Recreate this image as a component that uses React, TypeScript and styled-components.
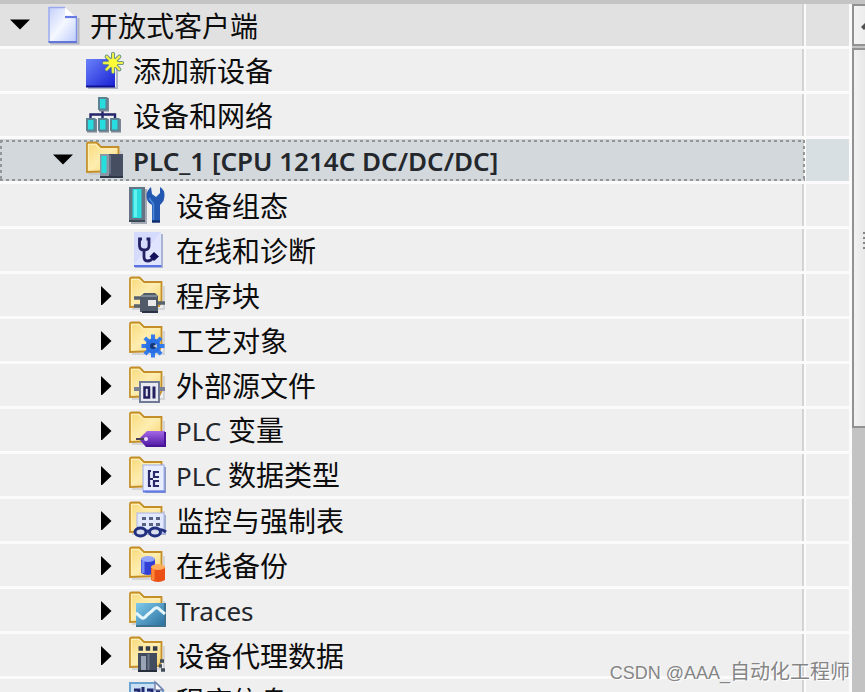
import React from "react";
import styled, { createGlobalStyle, css } from "styled-components";

const GlobalStyle = createGlobalStyle`
  * { box-sizing: border-box; }
  body { margin: 0; background: #efefef; }
`;

const Page = styled.div`
  position: relative;
  display: flex;
  height: 100vh;
  overflow: hidden;
  border-top: 4px solid #c4c4c4;
  background: #fbfbfb;
  color: #0c0c0c;
  font-family: "Noto Sans", "Noto Sans CJK SC", sans-serif;
`;

const Tree = styled.ul`
  flex: 1;
  min-width: 0;
  margin: 0;
  padding: 0;
  list-style: none;
`;

const Row = styled.li`
  display: grid;
  grid-template-columns: minmax(0, 1fr) 43px;
  column-gap: 2px;
  height: 45px;
  padding-bottom: 3px;
`;

type Tone = "header" | "plain" | "selected";

const tones: Record<Tone, string> = {
  header: "#e1e1e1",
  plain: "#efefef",
  selected: "#d2d8dc",
};

const focusFrame = css`
  &::after {
    content: "";
    position: absolute;
    inset: 1px -3px 0 0;
    pointer-events: none;
    background:
      repeating-linear-gradient(90deg, #929699 0 3px, transparent 3px 6px) 0 0 / 100% 2px no-repeat,
      repeating-linear-gradient(90deg, #929699 0 3px, transparent 3px 6px) 0 100% / 100% 2px no-repeat,
      repeating-linear-gradient(180deg, #929699 0 3px, transparent 3px 6px) 0 0 / 2px 100% no-repeat,
      repeating-linear-gradient(180deg, #929699 0 3px, transparent 3px 6px) 100% 0 / 2px 100% no-repeat;
  }
`;

const NameCell = styled.div<{ $level: number; $tone: Tone }>`
  position: relative;
  display: flex;
  align-items: center;
  padding-left: ${(p) => p.$level * 43}px;
  background: ${(p) => tones[p.$tone]};
  border-right: 2px solid #d3d3d3;
  ${(p) => p.$tone === "selected" && focusFrame}
`;

const SideCell = styled.div<{ $tone: Tone }>`
  background: ${(p) => (p.$tone === "selected" ? "#d8dfe3" : tones[p.$tone])};
`;

const Toggle = styled.button`
  flex: none;
  display: grid;
  place-items: center;
  width: 43px;
  height: 38px;
  padding: 0 3px 0 0;
  border: 0;
  background: none;
`;

const ToggleSpace = styled.span`
  flex: none;
  width: 43px;
`;

const IconBox = styled.svg`
  flex: none;
  width: 38px;
  height: 38px;
  overflow: visible;
`;

const Label = styled.span<{ $strong: boolean; $latin: boolean }>`
  margin-left: 9px;
  padding-top: ${(p) => (p.$latin ? 0 : 2)}px;
  font-size: 28px;
  line-height: 40px;
  white-space: nowrap;
  font-weight: ${(p) => (p.$strong ? 600 : 400)};
`;

const Latin = styled.span`
  font-size: 26px;
  color: #24272c;
`;

const Scrollbar = styled.div`
  flex: none;
  display: flex;
  flex-direction: column;
  width: 13px;
  margin-left: 3px;
  background: #c3c3c3;
  overflow: hidden;
`;

const ScrollUp = styled.button`
  flex: none;
  display: block;
  width: 34px;
  height: 42px;
  padding: 0;
  border: 2px solid #929292;
  background: linear-gradient(90deg, #f4f4f4, #dedede);
`;

const Thumb = styled.div`
  flex: none;
  width: 34px;
  height: 380px;
  margin-top: 2px;
  padding: 182px 0 0 9px;
  border: 2px solid #929292;
  background: linear-gradient(90deg, #f2f2f2, #d6d6d6);
`;

const Grip = styled.div`
  width: 16px;
  height: 18px;
  background: repeating-linear-gradient(180deg, #858585 0 2px, transparent 2px 5px);
`;

const Watermark = styled.div`
  position: absolute;
  right: 15px;
  bottom: 4px;
  font-family: "Liberation Sans", "Noto Sans CJK SC", sans-serif;
  font-size: 20px;
  line-height: 30px;
  color: #858585;
  text-shadow: 1px 1px 0 #ffffff;
  white-space: nowrap;
`;

const WatermarkName = styled.span`
  font-size: 18px;
`;

const Folder = () => (
  <>
    <defs>
      <linearGradient id="folder" x1="0" y1="0" x2="1" y2="1">
        <stop offset="0" stopColor="#f8d978" />
        <stop offset="0.5" stopColor="#fdedb0" />
        <stop offset="1" stopColor="#f7d36b" />
      </linearGradient>
    </defs>
    <path d="M3 33 35 33 35 10" fill="none" stroke="#b9bcc4" strokeWidth="2" opacity="0.5" />
    <path d="M1 31V3Q1 1.5 2.5 1.5H10.5L15 6H32.5V25L30 30Z" fill="url(#folder)" stroke="#c48f28" strokeWidth="1.8" />
    <path d="M2.5 29V3.5H10L14.5 8H31" fill="none" stroke="#fff0b8" strokeWidth="1.2" />
  </>
);

type IconName =
  | "project" | "add" | "network" | "plc" | "config" | "diagnose" | "blocks" | "tech"
  | "source" | "tags" | "types" | "watch" | "backup" | "traces" | "proxy" | "info";

const spokes = [0, 45, 90, 135, 180, 225, 270, 315];

const drawings: Record<IconName, React.ReactNode> = {
  project: (
    <>
      <defs>
        <linearGradient id="paper" x1="0" y1="0" x2="1" y2="1">
          <stop offset="0" stopColor="#c3cffa" />
          <stop offset="0.5" stopColor="#f5f8ff" />
          <stop offset="1" stopColor="#bccbfa" />
        </linearGradient>
      </defs>
      <path d="M7 37.5H35.5V12" fill="none" stroke="#9298aa" strokeWidth="2" opacity="0.6" />
      <path d="M6 1.5H22L33.5 12V36H6Z" fill="url(#paper)" />
      <path d="M6 36V1.5H22" fill="none" stroke="#9aa9ee" strokeWidth="1.5" />
      <path d="M33.5 12V36" stroke="#8294e6" strokeWidth="1.5" />
      <path d="M5.5 36H34" stroke="#6277d9" strokeWidth="2" />
      <path d="M22 1.5V11.5H33Z" fill="#fff" />
      <path d="M22 11H34" stroke="#647be3" strokeWidth="2.2" />
    </>
  ),
  add: (
    <>
      <defs>
        <linearGradient id="cube" x1="0" y1="0" x2="1" y2="1">
          <stop offset="0" stopColor="#6a82fa" />
          <stop offset="1" stopColor="#1820d4" />
        </linearGradient>
      </defs>
      <path d="M2 37H31V16" fill="none" stroke="#858cac" strokeWidth="2" opacity="0.6" />
      <path d="M0 8H29V36H0Z" fill="url(#cube)" />
      <path d="M0 35.5H29" stroke="#0d1090" strokeWidth="2" />
      {spokes.map((a) => (
        <path key={a} d="M27 12V3" stroke="#4d8087" strokeWidth="4" strokeLinecap="round" transform={`rotate(${a} 27 12)`} />
      ))}
      {spokes.map((a) => (
        <path key={a} d="M27 12V3" stroke="#f1f04a" strokeWidth="2.4" strokeLinecap="round" transform={`rotate(${a} 27 12)`} />
      ))}
      <circle cx="27" cy="12" r="4.5" fill="#ffff38" />
    </>
  ),
  network: (
    <>
      <path d="M16.5 13V24M4.5 25V18.5H29V25" fill="none" stroke="#24256b" strokeWidth="2.4" />
      {[[12, 1], [0, 22], [12, 22], [24, 22]].map(([x, y]) => (
        <g key={`${x}-${y}`}>
          <rect x={x + 1} y={y + 1} width="10" height="13.5" fill="#7b8796" />
          <rect x={x} y={y} width="9.5" height="13" fill="#5b8290" />
          <rect x={x + 2} y={y + 2} width="5.5" height="9.5" fill="#27dcdf" />
        </g>
      ))}
    </>
  ),
  plc: (
    <>
      <Folder />
      <rect x="14" y="13" width="23" height="24" fill="#475064" />
      <rect x="14" y="13" width="9" height="22" fill="#8a97a4" />
      <rect x="15.5" y="15" width="5" height="17" fill="#25dfdf" />
      <path d="M23 14H36V34H23Z" fill="#464f61" />
      <path d="M24 14V33" stroke="#667187" strokeWidth="2" />
      <path d="M14 36H37" stroke="#2e3648" strokeWidth="2" />
    </>
  ),
  config: (
    <>
      <rect x="2" y="3" width="16" height="35" fill="#a5aab4" />
      <rect x="0" y="1" width="16" height="35" fill="#657485" />
      <rect x="3.5" y="3" width="9" height="29" fill="#29dce0" />
      <path d="M5 4H8V31H5Z" fill="#65f1ee" />
      <path d="M0 35H16" stroke="#3d4859" strokeWidth="2" />
      <path d="M26 37V19L35 14" fill="none" stroke="#9ba8be" strokeWidth="2" opacity="0.5" />
      <path d="M23 36V19Q17 16 17.500 9Q18 4 22 1L23 8L27 11L31 7V1Q36 4 35.500 10Q35 16 31 19V36Z" fill="#2258b2" />
      <path d="M24.5 34V18L20 12" fill="none" stroke="#4b88d7" strokeWidth="1.6" />
      <path d="M23 35.5H31" stroke="#0f2c6d" strokeWidth="2.4" />
    </>
  ),
  diagnose: (
    <>
      <rect x="6" y="3" width="28" height="34" fill="#a9b4d5" />
      <rect x="5" y="1" width="27" height="34" fill="#e0e5fd" />
      <path d="M5 1H32L5 33Z" fill="#cbd4fb" opacity="0.6" />
      <path d="M5 35H32.5" stroke="#5971e5" strokeWidth="2" />
      <path d="M13 8H10.500V15Q11 19 15 19Q20 19 20 15V8H17.500M15 19V26Q15 30 18.500 30Q22 30 24 27" fill="none" stroke="#232064" strokeWidth="2.8" />
      <path d="M25 21L30 25.500L25 30L20.500 25.500Z" fill="#13105c" />
    </>
  ),
  blocks: (
    <>
      <Folder />
      <path d="M5 22H12M5 30H12M28 27H36" stroke="#59636e" strokeWidth="3.4" />
      <path d="M11 21L15 17H26L29 20V36H11Z" fill="#505a69" />
      <path d="M12 20H28" stroke="#7e8996" strokeWidth="2" />
      <rect x="19" y="24" width="8" height="6" fill="#e9e9e9" />
      <path d="M13 36H29" stroke="#293345" strokeWidth="2" />
    </>
  ),
  tech: (
    <>
      <Folder />
      {spokes.map((a) => (
        <path key={a} d="M24 25V13.5" stroke="#347bed" strokeWidth="4" transform={`rotate(${a} 24 25)`} />
      ))}
      <circle cx="24" cy="25" r="7.5" fill="#2870e4" />
      <circle cx="24" cy="25" r="3" fill="#16367b" />
      <path d="M24 25L28 23V27Z" fill="#b9c7cf" />
    </>
  ),
  source: (
    <>
      <Folder />
      <path d="M5 23H10M30 23H36" stroke="#7a8194" strokeWidth="4" />
      <rect x="11" y="16" width="19" height="20" fill="#e8e9f2" stroke="#717a95" strokeWidth="2" />
      <rect x="15.5" y="21.5" width="4.500" height="10" fill="none" stroke="#22205f" strokeWidth="2.5" />
      <path d="M25 20.5V32.5" stroke="#22205f" strokeWidth="3" />
    </>
  ),
  tags: (
    <>
      <Folder />
      <defs>
        <linearGradient id="tag" x1="0" y1="0" x2="0" y2="1">
          <stop offset="0" stopColor="#a467e7" />
          <stop offset="1" stopColor="#4b159f" />
        </linearGradient>
      </defs>
      <path d="M10 28L18 20H36V36H17Z" fill="url(#tag)" />
      <path d="M17 35H36V21" fill="none" stroke="#4a1697" strokeWidth="2" />
      <path d="M7 28H16" stroke="#494057" strokeWidth="2" />
      <circle cx="17" cy="28" r="2" fill="#efdfff" />
    </>
  ),
  types: (
    <>
      <Folder />
      <rect x="16" y="11" width="21" height="26" fill="#8d9bc0" />
      <rect x="14" y="9" width="21" height="26" fill="#e8edff" stroke="#9caceb" />
      <path d="M14 35.5H36" stroke="#627be7" strokeWidth="2" />
      <path d="M22 15H20V30H22M30 16H25V21H30M30 25H25V30H30M20 23H24" fill="none" stroke="#2a2a69" strokeWidth="2.2" />
    </>
  ),
  watch: (
    <>
      <Folder />
      <rect x="10" y="14" width="27" height="20" fill="#a4b0cc" />
      <rect x="8" y="12" width="27" height="20" fill="#e1e8ff" stroke="#a7b5e5" />
      <path d="M13 17.5H31M13 23.5H31" stroke="#56627f" strokeWidth="3" strokeDasharray="4 3" />
      <ellipse cx="11.5" cy="31" rx="5.500" ry="4" fill="#d8deee" stroke="#223080" strokeWidth="3" />
      <ellipse cx="26" cy="31" rx="5.500" ry="4" fill="#d8deee" stroke="#223080" strokeWidth="3" />
      <path d="M17 31Q19 29 21 31M31 29Q33 28 37 31" fill="none" stroke="#223080" strokeWidth="3" />
    </>
  ),
  backup: (
    <>
      <Folder />
      <path d="M12 13Q19 9 26 13V27Q19 31 12 27Z" fill="#323fd4" />
      <ellipse cx="19" cy="13" rx="7" ry="3" fill="#93a4fc" />
      <path d="M14 15V27" stroke="#7488f6" strokeWidth="3" />
      <path d="M22 21Q29 17 36 21V34Q29 38 22 34Z" fill="#ea5016" />
      <ellipse cx="29" cy="21" rx="7" ry="3" fill="#ffad5b" />
      <path d="M24 23V34" stroke="#ff8935" strokeWidth="3" />
    </>
  ),
  traces: (
    <>
      <Folder />
      <defs>
        <linearGradient id="scope" x1="0" y1="0" x2="1" y2="1">
          <stop offset="0" stopColor="#7fcbed" />
          <stop offset="1" stopColor="#286c9b" />
        </linearGradient>
      </defs>
      <rect x="7" y="12" width="29" height="24" fill="url(#scope)" />
      <path d="M7 35H36V12" fill="none" stroke="#3d7391" strokeWidth="2" />
      <path d="M7 22L13 27Q15 28 18 24L23 20Q26 16 29 17L36 23" fill="none" stroke="#e4f5fc" strokeWidth="3" />
    </>
  ),
  proxy: (
    <>
      <Folder />
      <path d="M9.5 12.5H28.5" stroke="#353b49" strokeWidth="4.500" strokeDasharray="4.500 2.700" />
      <rect x="9" y="17" width="19" height="19" fill="#434c5f" />
      <rect x="12" y="20" width="5" height="14" fill="#98a4b4" />
      <path d="M19.500 18V35" stroke="#6b7689" strokeWidth="2" />
      <path d="M9 35H28" stroke="#262e3b" strokeWidth="2" />
      <path d="M31 25H35M32 34H36M30 30H33" stroke="#434c5a" strokeWidth="3.500" />
    </>
  ),
  info: (
    <>
      <path d="M1 2H27L34 9V37H1Z" fill="#c8dff4" stroke="#69a2cf" strokeWidth="2" />
      <path d="M26 1V9H34Z" fill="#fff" stroke="#7984ac" strokeWidth="1.5" />
      <path d="M5 9H10V14M14 6V15M18 9H23V14M27 11H31" fill="none" stroke="#20286f" strokeWidth="3" />
    </>
  ),
};

interface Item {
  icon: IconName;
  level: number;
  latin?: string;
  text?: string;
  open?: boolean;
  tone?: Tone;
}

const items: Item[] = [
  { icon: "project", level: 0, text: "开放式客户端", open: true, tone: "header" },
  { icon: "add", level: 1, text: "添加新设备" },
  { icon: "network", level: 1, text: "设备和网络" },
  { icon: "plc", level: 1, latin: "PLC_1 [CPU 1214C DC/DC/DC]", open: true, tone: "selected" },
  { icon: "config", level: 2, text: "设备组态" },
  { icon: "diagnose", level: 2, text: "在线和诊断" },
  { icon: "blocks", level: 2, text: "程序块", open: false },
  { icon: "tech", level: 2, text: "工艺对象", open: false },
  { icon: "source", level: 2, text: "外部源文件", open: false },
  { icon: "tags", level: 2, latin: "PLC ", text: "变量", open: false },
  { icon: "types", level: 2, latin: "PLC ", text: "数据类型", open: false },
  { icon: "watch", level: 2, text: "监控与强制表", open: false },
  { icon: "backup", level: 2, text: "在线备份", open: false },
  { icon: "traces", level: 2, latin: "Traces", open: false },
  { icon: "proxy", level: 2, text: "设备代理数据", open: false },
  { icon: "info", level: 2, text: "程序信息" },
];

const TreeRow = ({ icon, level, latin, text, open, tone = "plain" }: Item) => (
  <Row>
    <NameCell $level={level} $tone={tone}>
      {open === undefined ? (
        <ToggleSpace />
      ) : (
        <Toggle type="button" aria-expanded={open} aria-label={`${latin ?? ""}${text ?? ""}`}>
          <svg width="20" height="20" viewBox="0 0 20 20">
            <path d={open ? "M0 4.500H20L10 14.500Z" : "M5 1L15.500 11L5 21Z"} fill="#000" />
          </svg>
        </Toggle>
      )}
      <IconBox viewBox="0 0 38 38" aria-hidden="true">{drawings[icon]}</IconBox>
      <Label $strong={tone === "selected"} $latin={latin !== undefined}>
        {latin && <Latin>{latin}</Latin>}
        {text}
      </Label>
    </NameCell>
    <SideCell $tone={tone} />
  </Row>
);

export default function App() {
  return (
    <Page>
      <GlobalStyle />
      <Tree>
        {items.map((item) => (
          <TreeRow key={item.icon} {...item} />
        ))}
      </Tree>
      <Scrollbar>
        <ScrollUp type="button" aria-label="向上滚动">
          <svg width="30" height="36" viewBox="0 0 30 36">
            <path d="M7 21L15 13L23 21L20 24L15 19L10 24Z" fill="#505050" />
          </svg>
        </ScrollUp>
        <Thumb>
          <Grip />
        </Thumb>
      </Scrollbar>
      <Watermark>
        <WatermarkName>CSDN @AAA_</WatermarkName>自动化工程师
      </Watermark>
    </Page>
  );
}
